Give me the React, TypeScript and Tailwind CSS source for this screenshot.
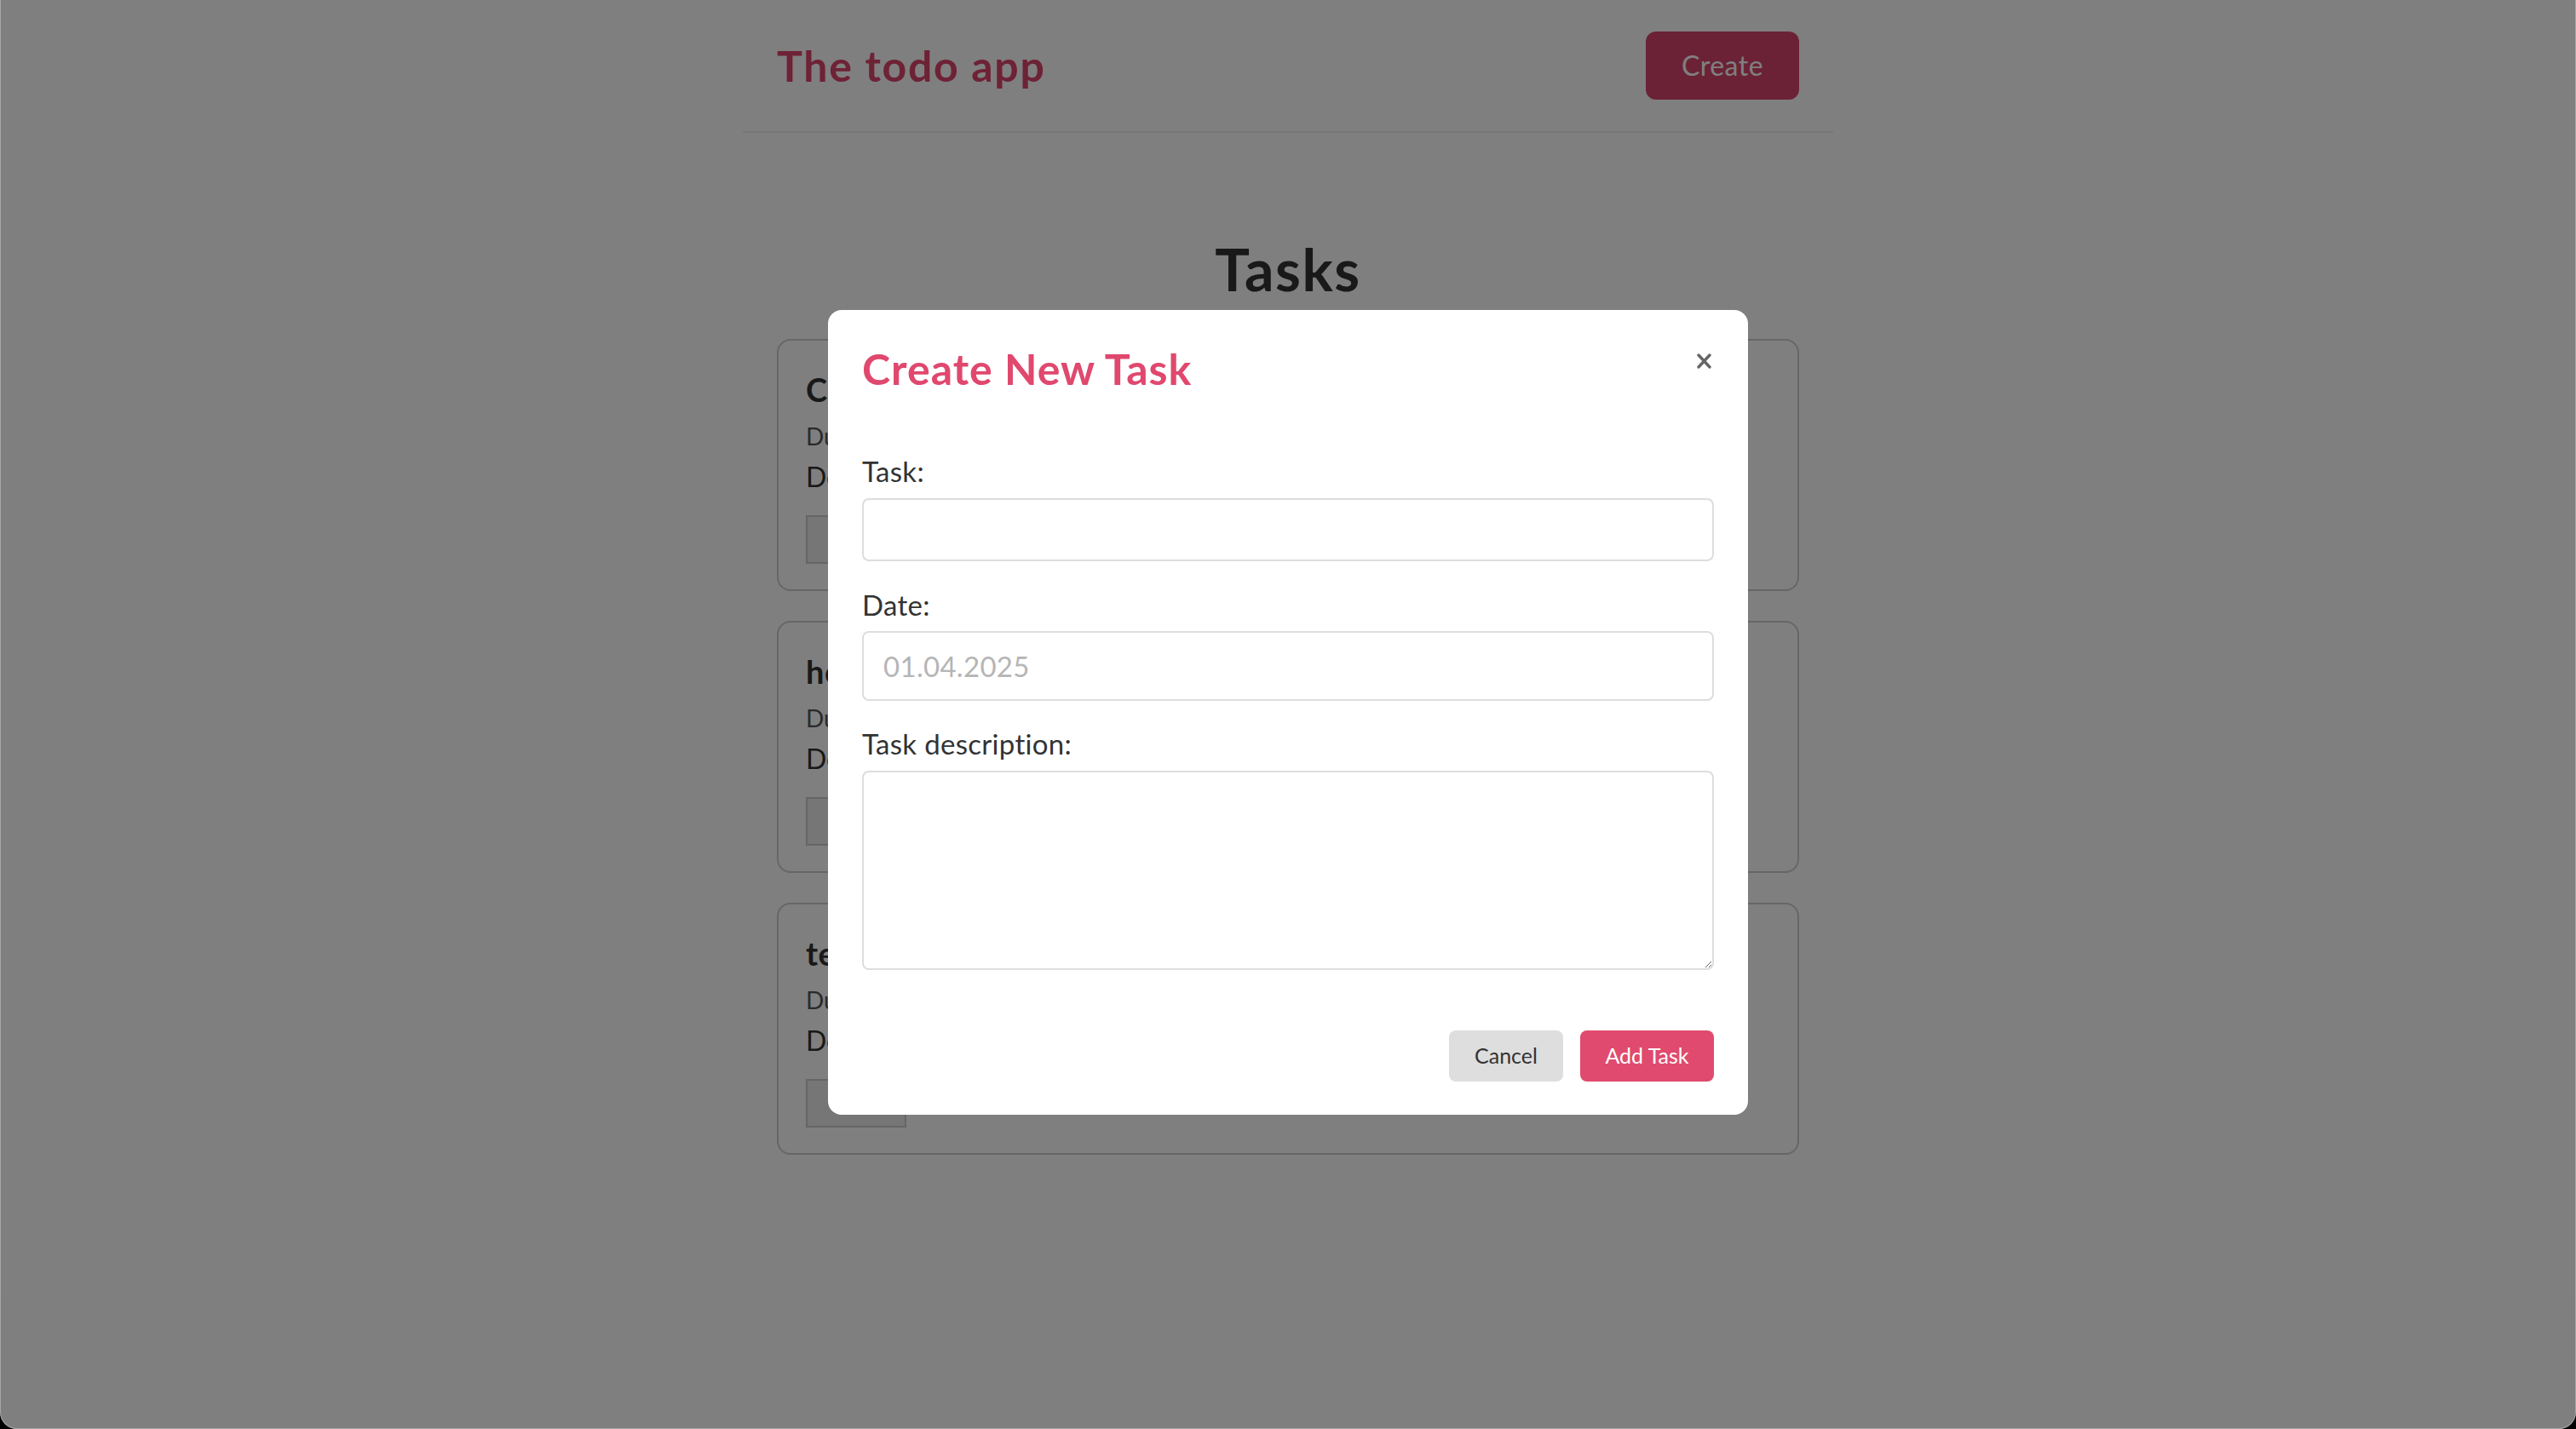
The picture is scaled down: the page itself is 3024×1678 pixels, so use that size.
import React from "react";

type Task = { title: string; due: string; desc: string };

const tasks: Task[] = [
  { title: "Clean the kitchen", due: "Due: 2025-04-02", desc: "Description: wipe the counters" },
  { title: "homework", due: "Due: 2025-04-03", desc: "Description: finish math exercises" },
  { title: "test task", due: "Due: 2025-04-05", desc: "Description: just a test" },
];

function TaskCard({ t }: { t: Task }) {
  return (
    <div className="h-[296px] rounded-[16px] border-2 border-[#cccccc] px-[32px] pt-[35px]">
      <div className="text-[38px] font-bold leading-[44px] tracking-[0.5px] text-[#333333]">{t.title}</div>
      <div className="mt-[16px] text-[28px] leading-[34px] text-[#555555]">{t.due}</div>
      <div className="mt-[12px] text-[32px] leading-[38px] text-[#333333]">{t.desc}</div>
      <button className="mt-[26px] h-[57px] w-[118px] border-2 border-[#cccccc] bg-[#ececec] text-[22px] text-[#333333]">
        Done
      </button>
    </div>
  );
}

export default function App() {
  return (
    <div className="h-[1678px] w-full overflow-hidden bg-black font-['Lato',sans-serif]">
      <div className="relative h-full overflow-hidden rounded-b-[20px] bg-white">
        <div className="mx-auto w-[1280px]">
          <header className="flex h-[156px] items-center justify-between border-b-2 border-[#eeeeee] px-[40px]">
            <div className="text-[50px] font-bold leading-[58px] tracking-[1.7px] text-[#dc446c]">The todo app</div>
            <button className="h-[80px] w-[180px] rounded-[12px] bg-[#d6446c] text-[32px] tracking-[0.5px] text-white">
              Create
            </button>
          </header>
          <main className="px-[40px]">
            <h1 className="mt-[120px] text-center text-[68px] font-bold leading-[80px] tracking-[1.5px] text-[#333333]">
              Tasks
            </h1>
            <div className="mt-[42px] flex flex-col gap-[35px]">
              {tasks.map((t) => (
                <TaskCard key={t.title} t={t} />
              ))}
            </div>
          </main>
        </div>

        <div className="absolute inset-0 flex items-center justify-center bg-black/50 pb-[5px]">
          <div className="w-[1080px] rounded-[16px] bg-white px-[40px] pb-[39px] pt-[40px]">
            <div className="flex items-start justify-between">
              <h2 className="text-[50px] font-bold leading-[58px] tracking-[1px] text-[#e0486e]">Create New Task</h2>
              <button className="mr-[3px] mt-[11px] flex h-[18px] w-[17px] items-center justify-center" aria-label="Close">
                <svg width="17" height="18" viewBox="0 0 17 18">
                  <path d="M2 2 L15 16 M15 2 L2 16" stroke="#666666" strokeWidth="3.4" strokeLinecap="round" />
                </svg>
              </button>
            </div>

            <label className="mt-[72px] block text-[33px] leading-[38px] tracking-[0.3px] text-[#333333]">Task:</label>
            <input
              type="text"
              className="mt-[13px] block h-[74px] w-full rounded-[8px] border-2 border-[#dddddd] px-[24px] text-[32px] outline-none"
            />

            <label className="mt-[32px] block text-[33px] leading-[38px] tracking-[0.3px] text-[#333333]">Date:</label>
            <div className="mt-[12px] flex h-[82px] w-full items-center rounded-[8px] border-2 border-[#dddddd] px-[23px] text-[33px] leading-[40px] tracking-[0.3px] text-[#b5b5b5]">
              01.04.2025
            </div>

            <label className="mt-[31px] block text-[33px] leading-[38px] tracking-[0.3px] text-[#333333]">
              Task description:
            </label>
            <textarea className="mt-[13px] block h-[234px] w-full rounded-[8px] border-2 border-[#dddddd] p-[16px] text-[32px] outline-none" />

            <div className="mt-[71px] flex justify-end gap-[20px]">
              <button className="h-[60px] w-[134px] rounded-[8px] bg-[#dedede] text-[25px] text-[#333333]">Cancel</button>
              <button className="h-[60px] w-[157px] rounded-[8px] bg-[#e04a6e] text-[25px] text-white">Add Task</button>
            </div>
          </div>
        </div>

        <div className="pointer-events-none absolute inset-0 rounded-b-[20px] border border-t-0 border-white/30" />
      </div>
    </div>
  );
}
